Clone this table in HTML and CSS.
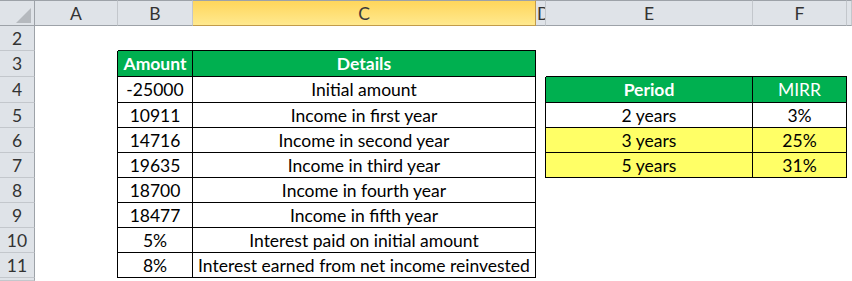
FILE: index.html
```html
<!DOCTYPE html>
<html lang="en">
<head>
  <meta charset="UTF-8">
  <meta name="viewport" content="width=device-width, initial-scale=1.0">
  <link rel="stylesheet" href="styles.css">
  <title>MIRR</title>
</head>
<body>
  <div class="sheet">
    <!-- column headers -->
    <div class="corner"><span class="tri"></span></div>
    <div class="ch">A</div>
    <div class="ch">B</div>
    <div class="ch sel">C</div>
    <div class="ch narrow">D</div>
    <div class="ch">E</div>
    <div class="ch">F</div>
    <div class="ch"></div>

    <!-- row 2 -->
    <div class="rh">2</div>
    <div class="cell"></div>
    <div class="cell b"></div>
    <div class="cell b"></div>
    <div class="cell"></div>
    <div class="cell"></div>
    <div class="cell"></div>
    <div class="cell"></div>

    <!-- row 3 -->
    <div class="rh">3</div>
    <div class="cell r"></div>
    <div class="cell r b g bold">Amount</div>
    <div class="cell r b g bold">Details</div>
    <div class="cell"></div>
    <div class="cell b"></div>
    <div class="cell b"></div>
    <div class="cell"></div>

    <!-- row 4 -->
    <div class="rh">4</div>
    <div class="cell r"></div>
    <div class="cell r b">-25000</div>
    <div class="cell r b">Initial amount</div>
    <div class="cell r"></div>
    <div class="cell r b g bold">Period</div>
    <div class="cell r b g">MIRR</div>
    <div class="cell"></div>

    <!-- row 5 -->
    <div class="rh">5</div>
    <div class="cell r"></div>
    <div class="cell r b">10911</div>
    <div class="cell r b">Income in first year</div>
    <div class="cell r"></div>
    <div class="cell r b">2 years</div>
    <div class="cell r b">3%</div>
    <div class="cell"></div>

    <!-- row 6 -->
    <div class="rh">6</div>
    <div class="cell r"></div>
    <div class="cell r b">14716</div>
    <div class="cell r b">Income in second year</div>
    <div class="cell r"></div>
    <div class="cell r b y">3 years</div>
    <div class="cell r b y">25%</div>
    <div class="cell"></div>

    <!-- row 7 -->
    <div class="rh">7</div>
    <div class="cell r"></div>
    <div class="cell r b">19635</div>
    <div class="cell r b">Income in third year</div>
    <div class="cell r"></div>
    <div class="cell r b y">5 years</div>
    <div class="cell r b y">31%</div>
    <div class="cell"></div>

    <!-- row 8 -->
    <div class="rh">8</div>
    <div class="cell r"></div>
    <div class="cell r b">18700</div>
    <div class="cell r b">Income in fourth year</div>
    <div class="cell"></div>
    <div class="cell"></div>
    <div class="cell"></div>
    <div class="cell"></div>

    <!-- row 9 -->
    <div class="rh">9</div>
    <div class="cell r"></div>
    <div class="cell r b">18477</div>
    <div class="cell r b">Income in fifth year</div>
    <div class="cell"></div>
    <div class="cell"></div>
    <div class="cell"></div>
    <div class="cell"></div>

    <!-- row 10 -->
    <div class="rh">10</div>
    <div class="cell r"></div>
    <div class="cell r b">5%</div>
    <div class="cell r b">Interest paid on initial amount</div>
    <div class="cell"></div>
    <div class="cell"></div>
    <div class="cell"></div>
    <div class="cell"></div>

    <!-- row 11 -->
    <div class="rh">11</div>
    <div class="cell r"></div>
    <div class="cell r b">8%</div>
    <div class="cell r b">Interest earned from net income reinvested</div>
    <div class="cell"></div>
    <div class="cell"></div>
    <div class="cell"></div>
    <div class="cell"></div>

    <!-- row 12, only its top edge shows -->
    <div class="rh"></div>
    <div class="cell"></div>
    <div class="cell"></div>
    <div class="cell"></div>
    <div class="cell"></div>
    <div class="cell"></div>
    <div class="cell"></div>
    <div class="cell"></div>
  </div>
</body>
</html>
```

FILE: styles.css
```css
body {
    margin: 0;
    overflow: hidden;
    background: #ffffff;
    font-family: Lato, "Open Sans", sans-serif;
    font-size: 17.5px;
    color: #000000;
}

.sheet {
    display: grid;
    grid-template-columns: 35px 83px 75px 343px 10px 207px 94px 1fr;
    grid-template-rows: 26px 25px 26px 26px repeat(7, 25px) 3px;
    width: 852px;
    height: 281px;
}

.sheet > div {
    box-sizing: border-box;
    display: flex;
    align-items: center;
    justify-content: center;
    white-space: nowrap;
    overflow: hidden;
}

/* headers */
.corner,
.ch {
    background: #dfe3e8;
    border-top: 1px solid #9da2a8;
    border-bottom: 1px solid #9da2a8;
    border-right: 1px solid #c3c7cc;
    color: #333333;
}

.corner {
    position: relative;
    border-right-color: #9da2a8;
}

.tri {
    position: absolute;
    right: 3px;
    bottom: 2px;
    width: 0;
    height: 0;
    border-left: 15px solid transparent;
    border-bottom: 15px solid #b5b9be;
}

.ch.sel {
    background: linear-gradient(#ffd65b, #ffe98f);
    border-color: #c29b4a;
    border-top-color: #9da2a8;
    color: #3a3a3a;
}

.ch.narrow {
    justify-content: flex-start;
    padding-left: 1px;
}

.rh {
    background: #dfe3e8;
    border-right: 1px solid #9da2a8;
    border-bottom: 1px solid #c3c7cc;
    color: #333333;
}

/* cells */
.cell.r {
    border-right: 1px solid #000000;
}

.cell.b {
    border-bottom: 1px solid #000000;
}

.cell.g {
    background: #00b050;
    color: #ffffff;
}

.cell.y {
    background: #ffff66;
}

.bold {
    font-weight: bold;
}
```
